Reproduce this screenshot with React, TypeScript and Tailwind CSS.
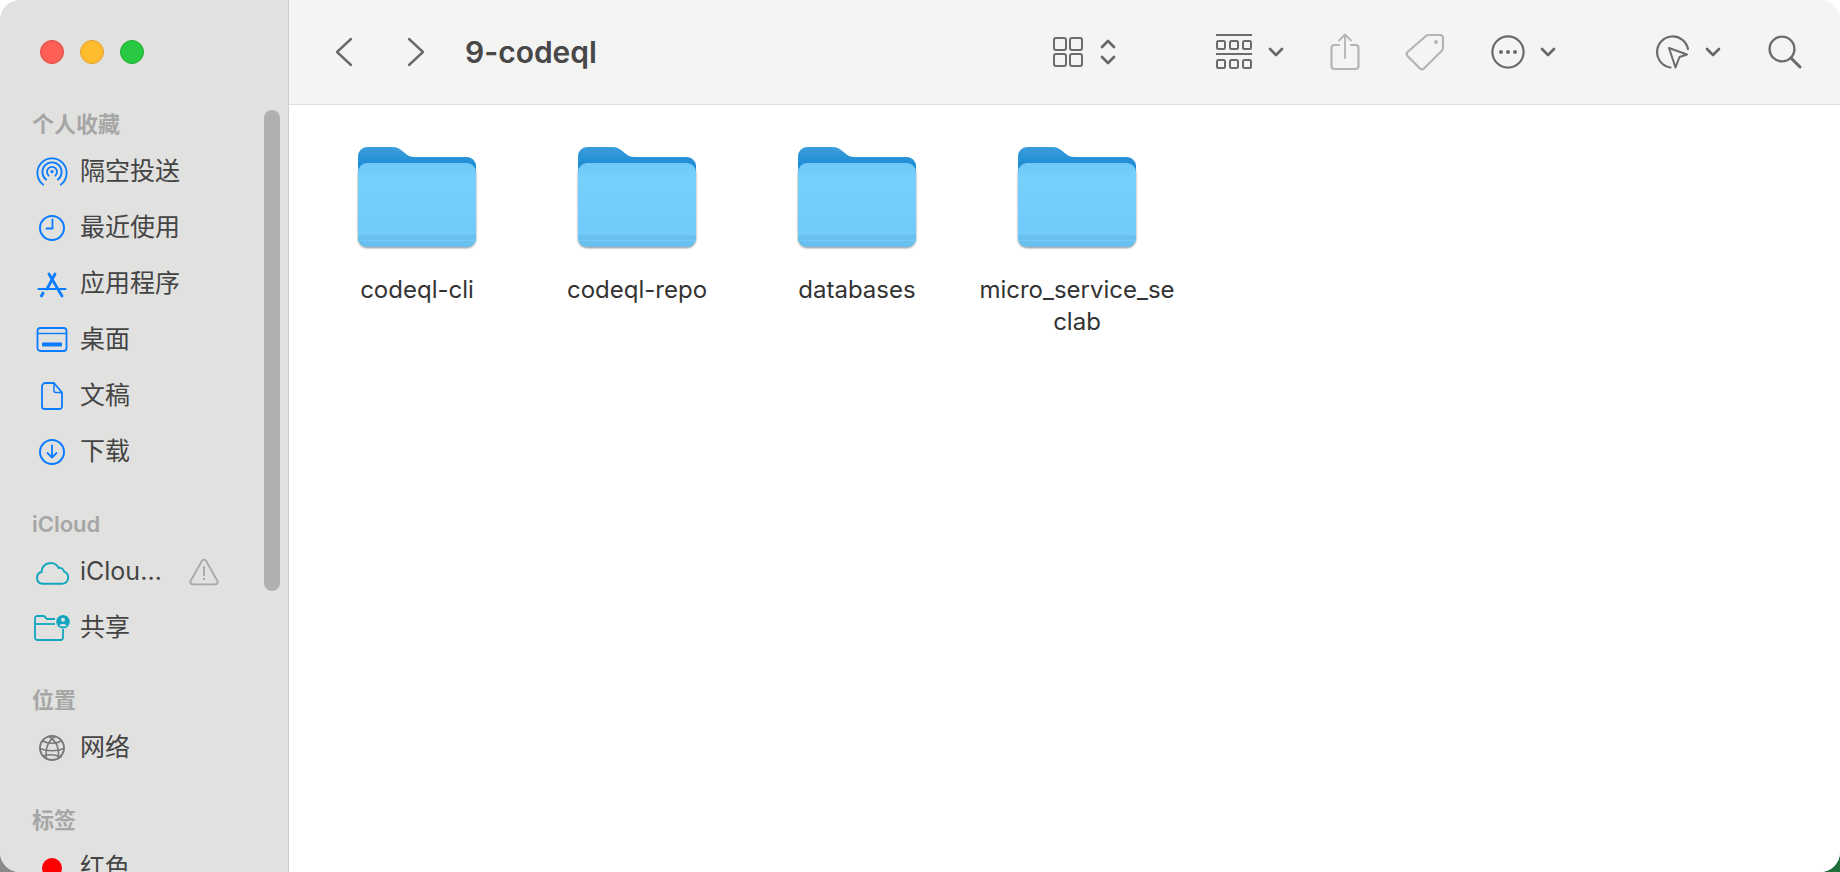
import React from 'react';

const BLUE = '#0a7cff';
const TEAL = '#12a6bf';

const AirDropIcon = () => (
  <svg width="32" height="32" viewBox="0 0 32 32" fill="none" stroke={BLUE} strokeWidth="1.8" strokeLinecap="round">
    <path d="M7.2 28.6A14.6 14.6 0 1 1 24.8 28.6" />
    <path d="M10.2 23.6A9.6 9.6 0 1 1 21.8 23.6" />
    <path d="M12.6 19.6A5 5 0 1 1 19.4 19.6" />
    <circle cx="16" cy="15.6" r="1.6" fill={BLUE} stroke="none" />
  </svg>
);

const ClockIcon = () => (
  <svg width="32" height="32" viewBox="0 0 32 32" fill="none" stroke={BLUE} strokeWidth="2" strokeLinecap="round" strokeLinejoin="round">
    <circle cx="16" cy="16" r="12" />
    <path d="M16.5 7.5V16.5H10.5" strokeWidth="1.8" />
  </svg>
);

const AppsIcon = () => (
  <svg width="32" height="32" viewBox="0 0 32 32" fill="none" stroke={BLUE} strokeWidth="2.8" strokeLinecap="round">
    <path d="M13 6L26 28" />
    <path d="M19 6L11 21" />
    <path d="M5.5 28L7 25" />
    <path d="M2.5 21H29.5" strokeWidth="2.2" />
  </svg>
);

const DesktopIcon = () => (
  <svg width="32" height="32" viewBox="0 0 32 32" fill="none" stroke={BLUE} strokeWidth="1.8">
    <rect x="1.5" y="4" width="29" height="23" rx="3" />
    <path d="M1.5 9.5H30.5" strokeWidth="1.4" />
    <rect x="6" y="18.5" width="20" height="4" rx="0.8" fill={BLUE} stroke="none" />
  </svg>
);

const DocIcon = () => (
  <svg width="32" height="32" viewBox="0 0 32 32" fill="none" stroke={BLUE} strokeWidth="1.8" strokeLinejoin="round">
    <path d="M9.5 3H18L26 12.5V26.5A2.5 2.5 0 0 1 23.5 29H8.5A2.5 2.5 0 0 1 6 26.5V6.5A3.5 3.5 0 0 1 9.5 3Z" />
    <path d="M18 3V10.5A2 2 0 0 0 20 12.5H26" strokeWidth="1.5" />
  </svg>
);

const DownloadIcon = () => (
  <svg width="32" height="32" viewBox="0 0 32 32" fill="none" stroke={BLUE} strokeWidth="2" strokeLinecap="round" strokeLinejoin="round">
    <circle cx="16" cy="16" r="12" />
    <path d="M16 9.5V21.5M11.5 17L16 21.5L20.5 17" strokeWidth="1.8" />
  </svg>
);

const CloudIcon = () => (
  <svg width="36" height="25" viewBox="0 0 34 24" fill="none" stroke={TEAL} strokeWidth="1.9" strokeLinejoin="round" className="shrink-0">
    <path d="M7.5 22.8H26.5A6 6 0 0 0 28.6 11.2A4.6 4.6 0 0 0 23.4 7.6A8.8 8.8 0 0 0 7 10.5C7 10.9 7 11.2 7.1 11.6A5.7 5.7 0 0 0 7.5 22.8Z" />
  </svg>
);

const SharedIcon = () => (
  <svg width="36" height="26" viewBox="0 0 36 26" fill="none" stroke={TEAL} strokeWidth="1.8" strokeLinejoin="round" className="shrink-0">
    <path d="M1 7V22.5A2.5 2.5 0 0 0 3.5 25H26.5A2.5 2.5 0 0 0 29 22.5V14" />
    <path d="M1 8V3.5A2.5 2.5 0 0 1 3.5 1H10L13 4H21" />
    <path d="M1 9H21" />
    <circle cx="29" cy="6.8" r="6.8" fill={TEAL} stroke="none" />
    <circle cx="29" cy="4.8" r="2" fill="#e1e1e0" stroke="none" />
    <path d="M25.4 10.6C26 8.6 32 8.6 32.6 10.6C31.5 11.8 26.5 11.8 25.4 10.6Z" fill="#e1e1e0" stroke="none" />
  </svg>
);

const GlobeIcon = () => (
  <svg width="32" height="32" viewBox="0 0 32 32" fill="none" stroke="#7a7a7a" strokeWidth="1.6" strokeLinecap="round">
    <circle cx="16" cy="16" r="12" strokeWidth="1.9" />
    <path d="M19 4.5C12 9 9 16 10.5 26.5" />
    <path d="M13 4.5C20 9 24 16 22 26.5" />
    <path d="M6.5 9C12 12 20 12 25.5 9" />
    <path d="M4 16.5C11 19.5 21 19.5 28 16.5" />
    <path d="M7 24C13 22 20 23 25 25" />
  </svg>
);

const WarningIcon = () => (
  <svg width="30" height="28" viewBox="0 0 30 28" fill="none" stroke="#a8a8a8" strokeWidth="1.8" strokeLinejoin="round" strokeLinecap="round">
    <path d="M13 2.8A2.3 2.3 0 0 1 17 2.8L28.4 23A2.3 2.3 0 0 1 26.4 26.4H3.6A2.3 2.3 0 0 1 1.6 23Z" />
    <path d="M15 9V17" strokeWidth="2" />
    <circle cx="15" cy="21" r="1.2" fill="#a8a8a8" stroke="none" />
  </svg>
);

const RedDot = () => <div className="w-5 h-5 rounded-full bg-[#ff0000]" />;

const Chevron = ({ dir }: { dir: 'left' | 'right' }) => (
  <svg width="18" height="30" viewBox="0 0 18 30" fill="none" stroke="#6b6b6b" strokeWidth="2.4" strokeLinecap="round" strokeLinejoin="round">
    <path d={dir === 'left' ? 'M16 2L2 15L16 28' : 'M2 2L16 15L2 28'} />
  </svg>
);

const SmallDown = () => (
  <svg width="16" height="10" viewBox="0 0 16 10" fill="none" stroke="#666" strokeWidth="2.6" strokeLinecap="round" strokeLinejoin="round">
    <path d="M2 2L8 8L14 2" />
  </svg>
);

const GridIcon = () => (
  <svg width="30" height="30" viewBox="0 0 30 30" fill="none" stroke="#6b6b6b" strokeWidth="2">
    <rect x="1" y="1" width="12" height="12" rx="2" />
    <rect x="17" y="1" width="12" height="12" rx="2" />
    <rect x="1" y="17" width="12" height="12" rx="2" />
    <rect x="17" y="17" width="12" height="12" rx="2" />
  </svg>
);

const UpDown = () => (
  <svg width="16" height="28" viewBox="0 0 16 28" fill="none" stroke="#666" strokeWidth="2.6" strokeLinecap="round" strokeLinejoin="round">
    <path d="M2 9L8 3L14 9" />
    <path d="M2 19L8 25L14 19" />
  </svg>
);

const GroupIcon = () => (
  <svg width="36" height="36" viewBox="0 0 36 36" fill="none" stroke="#6b6b6b" strokeWidth="2">
    <path d="M0 1H36M0 20H36" />
    <rect x="1" y="7" width="8" height="8" rx="1.5" />
    <rect x="14" y="7" width="8" height="8" rx="1.5" />
    <rect x="27" y="7" width="8" height="8" rx="1.5" />
    <rect x="1" y="26" width="8" height="8" rx="1.5" />
    <rect x="14" y="26" width="8" height="8" rx="1.5" />
    <rect x="27" y="26" width="8" height="8" rx="1.5" />
  </svg>
);

const ShareIcon = () => (
  <svg width="30" height="38" viewBox="0 0 30 38" fill="none" stroke="#b4b4b3" strokeWidth="2.2" strokeLinecap="round" strokeLinejoin="round">
    <path d="M9 12H4A3 3 0 0 0 1.5 15V33.5A3 3 0 0 0 4 36H26A3 3 0 0 0 28.5 33.5V15A3 3 0 0 0 26 12H21" />
    <path d="M15 25V2M9 7.5L15 1.5L21 7.5" strokeWidth="1.8" />
  </svg>
);

const TagIcon = () => (
  <svg width="40" height="38" viewBox="0 0 40 38" fill="none" stroke="#b4b4b3" strokeWidth="2.2" strokeLinejoin="round">
    <path d="M24 2H35A3 3 0 0 1 38 5V15A4 4 0 0 1 37 17.5L19 35.5A3 3 0 0 1 15 35.5L2.5 23A3 3 0 0 1 2.5 19L21 3A4 4 0 0 1 24 2Z" />
    <circle cx="31" cy="9" r="2" fill="#b4b4b3" stroke="none" />
  </svg>
);

const MoreIcon = () => (
  <svg width="34" height="34" viewBox="0 0 34 34" fill="none" stroke="#6b6b6b" strokeWidth="2.2">
    <circle cx="17" cy="17" r="15.6" />
    <circle cx="10" cy="17" r="2" fill="#6b6b6b" stroke="none" />
    <circle cx="17" cy="17" r="2" fill="#6b6b6b" stroke="none" />
    <circle cx="24" cy="17" r="2" fill="#6b6b6b" stroke="none" />
  </svg>
);

const AirplayCursorIcon = () => (
  <svg width="36" height="36" viewBox="0 0 36 36" fill="none" stroke="#6b6b6b" strokeWidth="2.2" strokeLinecap="round" strokeLinejoin="round">
    <path d="M15.5 33.5A15.6 15.6 0 1 1 33 15" />
    <path d="M14 14L32 20.5L24.5 23L20.5 33.5Z" strokeWidth="2" />
  </svg>
);

const SearchIcon = () => (
  <svg width="34" height="34" viewBox="0 0 34 34" fill="none" stroke="#6b6b6b" strokeWidth="2.4" strokeLinecap="round">
    <circle cx="14" cy="14" r="12.4" />
    <path d="M23 23L32 32" strokeWidth="3" />
  </svg>
);

const FolderIcon = () => (
  <svg width="122" height="104" viewBox="0 0 122 104" fill="none">
    <defs>
      <linearGradient id="folderBack" x1="0" y1="0" x2="0" y2="1">
        <stop offset="0" stopColor="#3d9ddb" />
        <stop offset="0.5" stopColor="#1b8bd3" />
      </linearGradient>
      <linearGradient id="folderFront" x1="0" y1="0" x2="0" y2="1">
        <stop offset="0" stopColor="#6fc8f7" />
        <stop offset="0.2" stopColor="#76cffd" />
        <stop offset="1" stopColor="#70c9f8" />
      </linearGradient>
      <filter id="folderShadow" x="-5%" y="-5%" width="110%" height="115%">
        <feGaussianBlur stdDeviation="1" />
      </filter>
    </defs>
    <rect x="2" y="19" width="118" height="83" rx="9" fill="#000" opacity="0.45" filter="url(#folderShadow)" />
    <path d="M2 10A9 9 0 0 1 11 1H36C41 1 44 3 47 5.5C50 8 53 11 58 11H111A9 9 0 0 1 120 20V40H2Z" fill="url(#folderBack)" />
    <path d="M2 26A9 9 0 0 1 11 17H111A9 9 0 0 1 120 26V92A9 9 0 0 1 111 101H11A9 9 0 0 1 2 92Z" fill="url(#folderFront)" />
    <path d="M2 89H120V92A9 9 0 0 1 111 101H11A9 9 0 0 1 2 92Z" fill="#69bfee" />
    <path d="M2 94.5H120" stroke="#75c9f5" strokeWidth="1.5" />
  </svg>
);

type Row = { icon: React.ReactNode; label: string; trailing?: React.ReactNode };

const sections: { title: string; rows: Row[] }[] = [
  {
    title: '个人收藏',
    rows: [
      { icon: <AirDropIcon />, label: '隔空投送' },
      { icon: <ClockIcon />, label: '最近使用' },
      { icon: <AppsIcon />, label: '应用程序' },
      { icon: <DesktopIcon />, label: '桌面' },
      { icon: <DocIcon />, label: '文稿' },
      { icon: <DownloadIcon />, label: '下载' },
    ],
  },
  {
    title: 'iCloud',
    rows: [
      { icon: <CloudIcon />, label: 'iClou…', trailing: <WarningIcon /> },
      { icon: <SharedIcon />, label: '共享' },
    ],
  },
  { title: '位置', rows: [{ icon: <GlobeIcon />, label: '网络' }] },
  { title: '标签', rows: [{ icon: <RedDot />, label: '红色' }] },
];

const folders = ['codeql-cli', 'codeql-repo', 'databases', 'micro_service_se\nclab'];

// one sidebar block: grey heading followed by its rows
const SidebarSection = ({ title, rows }: { title: string; rows: Row[] }) => (
  <div className="mb-[26px]">
    <div className="h-[38px] flex items-center pl-8 pb-px text-[22px] font-semibold text-[#a6a6a6]">{title}</div>
    {rows.map(row => (
      <div key={row.label} className="h-14 flex items-center pl-9">
        <div className="w-8 flex justify-center shrink-0">{row.icon}</div>
        <span className="ml-3 text-[25px] text-[#444444]">{row.label}</span>
        {row.trailing && <div className="ml-[27px]">{row.trailing}</div>}
      </div>
    ))}
  </div>
);

export default function App() {
  return (
    <div className="relative w-[1840px] h-[872px] overflow-hidden bg-white font-['Inter','Noto_Sans_CJK_SC',sans-serif]">
      {/* desktop wallpaper peeking out behind the rounded corners */}
      <div className="absolute left-0 bottom-0 w-6 h-6 bg-[#8a8a8a]" />
      <div className="absolute right-0 bottom-0 w-6 h-6 bg-[#1f6e3c]" />

      <div className="relative flex h-full rounded-[20px] overflow-hidden bg-white">
        <aside className="w-[289px] shrink-0 flex flex-col relative bg-[#e1e1e0] border-r border-[#cdcdcc]">
          <div className="h-[104px] shrink-0 flex items-center pl-10 gap-4">
            <div className="w-6 h-6 rounded-full bg-[#ff5f57] border border-[#e2463f]" />
            <div className="w-6 h-6 rounded-full bg-[#febc2e] border border-[#e1a126]" />
            <div className="w-6 h-6 rounded-full bg-[#28c840] border border-[#1fae33]" />
          </div>
          <div className="flex-1 overflow-hidden pt-[2px]">
            {sections.map(s => (
              <SidebarSection key={s.title} title={s.title} rows={s.rows} />
            ))}
          </div>
          {/* overlay scrollbar */}
          <div className="absolute left-[264px] top-[110px] w-4 h-[481px] rounded-full bg-[#b0b0af]" />
        </aside>

        <main className="flex-1 flex flex-col min-w-0">
          <header className="h-[105px] shrink-0 flex items-center bg-[#f4f4f3] border-b border-[#dfdfde]">
            <div className="ml-[46px]"><Chevron dir="left" /></div>
            <div className="ml-[54px]"><Chevron dir="right" /></div>
            <h1 className="ml-[40px] text-[30px] font-semibold text-[#484848]">9-codeql</h1>
            <div className="ml-auto flex items-center pr-[38px]">
              <GridIcon />
              <div className="ml-[17px]"><UpDown /></div>
              <div className="ml-[100px]"><GroupIcon /></div>
              <div className="ml-4"><SmallDown /></div>
              <div className="ml-[46px]"><ShareIcon /></div>
              <div className="ml-[45px]"><TagIcon /></div>
              <div className="ml-[46px]"><MoreIcon /></div>
              <div className="ml-[15px]"><SmallDown /></div>
              <div className="ml-[99px]"><AirplayCursorIcon /></div>
              <div className="ml-[14px]"><SmallDown /></div>
              <div className="ml-[47px]"><SearchIcon /></div>
            </div>
          </header>

          <div className="flex-1 bg-white pl-[18px] pt-[41px] flex items-start">
            {folders.map(name => (
              <div key={name} className="w-[220px] flex flex-col items-center">
                <FolderIcon />
                <span className="mt-6 text-[24px] leading-8 text-[#333333] text-center whitespace-pre-line">{name}</span>
              </div>
            ))}
          </div>
        </main>
      </div>
    </div>
  );
}
